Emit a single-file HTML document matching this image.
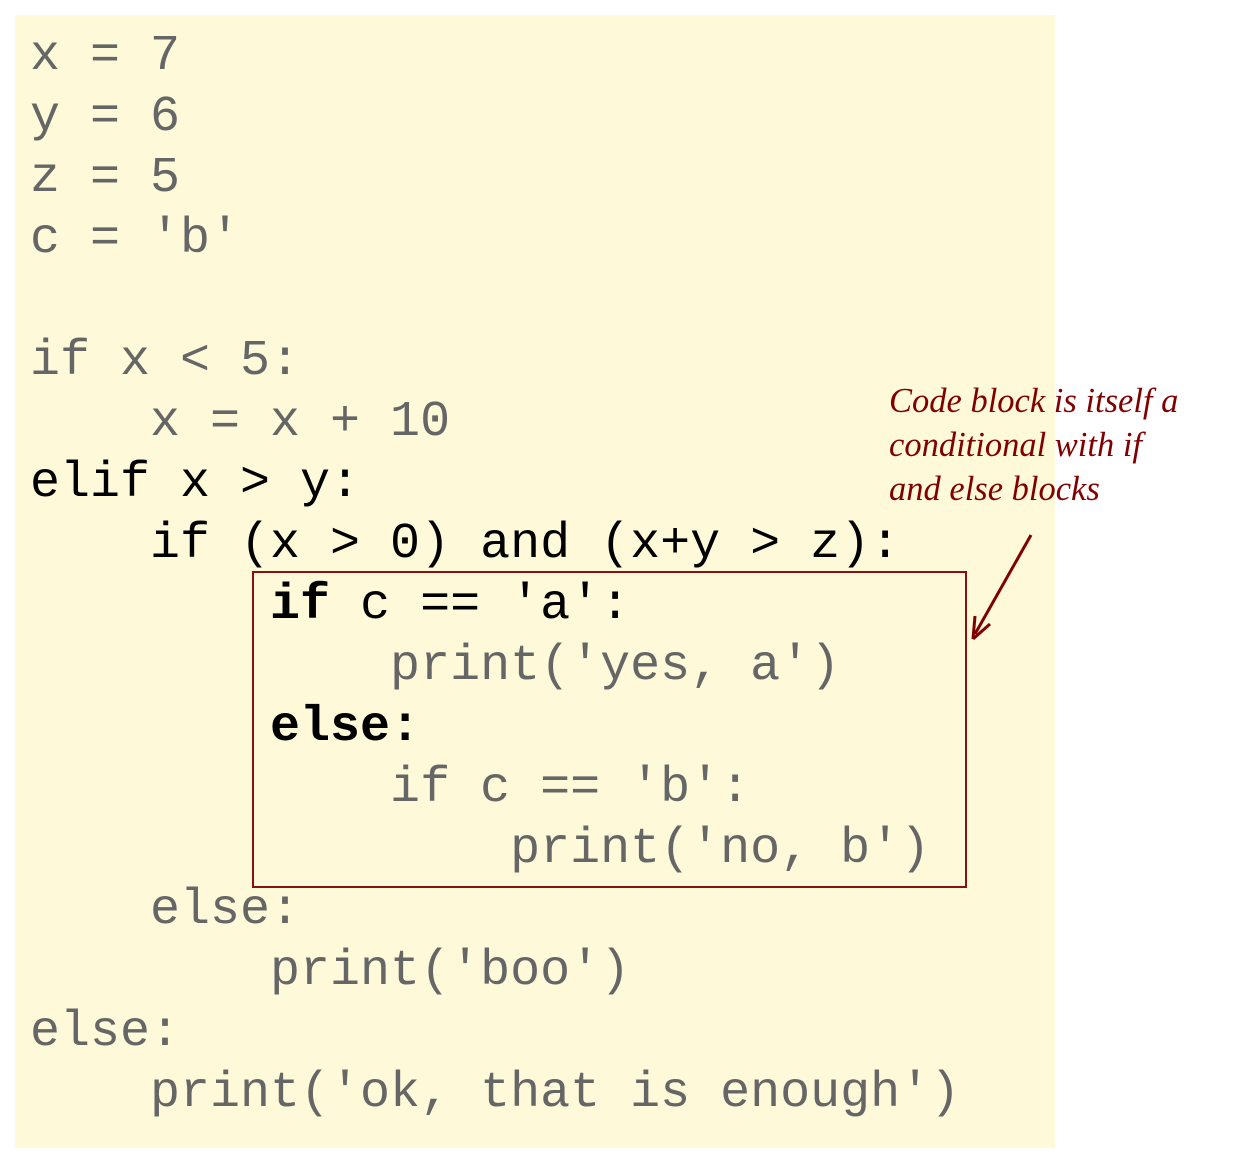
<!DOCTYPE html>
<html><head><meta charset="utf-8"><style>
body{margin:0;width:1240px;height:1164px;background:#fff;position:relative;overflow:hidden}
#panel{position:absolute;left:15px;top:15px;width:1040px;height:1133px;background:#fef9d9}
pre{position:absolute;left:30px;top:26px;margin:0;font-family:"Liberation Mono",monospace;font-size:50px;line-height:61px;color:#666}
.k{color:#000}.b{color:#000;font-weight:bold}
#box{position:absolute;left:252px;top:571px;width:711px;height:313px;border:2.5px solid #8b1111}
#note{position:absolute;left:889px;top:379px;font-family:"Liberation Serif",serif;font-style:italic;font-size:34.5px;line-height:44px;color:#800000;white-space:nowrap}
svg{position:absolute;left:0;top:0}
</style></head><body>
<div id="panel"></div>
<div id="box"></div>
<pre>x = 7
y = 6
z = 5
c = 'b'

if x &lt; 5:
    x = x + 10
<span class="k">elif x &gt; y:</span>
<span class="k">    if (x &gt; 0) and (x+y &gt; z):</span>
        <span class="b">if</span><span class="k"> c == 'a':</span>
            print('yes, a')
        <span class="b">else:</span>
            if c == 'b':
                print('no, b')
    else:
        print('boo')
else:
    print('ok, that is enough')</pre>
<div id="note">Code block is itself a<br>conditional with if<br>and else blocks</div>
<svg width="1240" height="1164"><line x1="1031" y1="535" x2="975" y2="634" stroke="#800000" stroke-width="3"/><path d="M973 639 L975 616 M973 639 L990 624" stroke="#800000" stroke-width="3" fill="none"/></svg>
</body></html>
